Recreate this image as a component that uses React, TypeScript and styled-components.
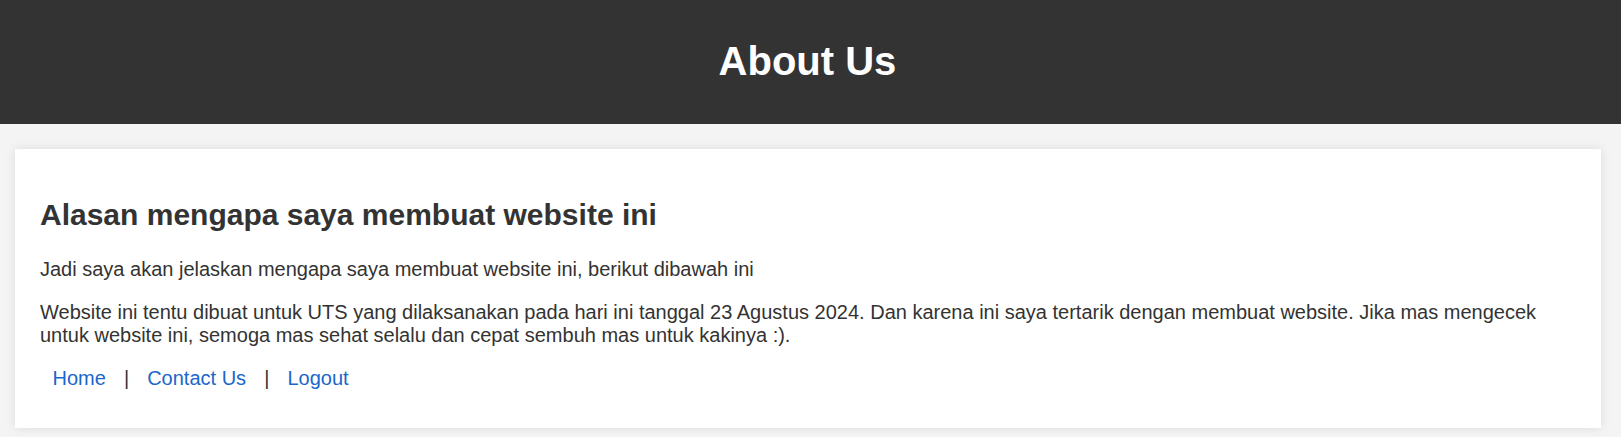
import React from "react";
import styled, { createGlobalStyle } from "styled-components";

const GlobalStyle = createGlobalStyle`
  html, body {
    margin: 0;
    padding: 0;
    background: #f4f4f4;
    font-family: "Liberation Sans", Arial, sans-serif;
    color: #333333;
  }
`;

const Header = styled.header`
  background: #333333;
  color: #ffffff;
  text-align: center;
  padding: 38px 6px 40px 0;
`;

const Title = styled.h1`
  margin: 0;
  font-size: 40px;
  line-height: 46px;
  font-weight: 700;
`;

const Main = styled.main`
  padding: 25px 20px 10px 15px;
`;

const Card = styled.section`
  background: #ffffff;
  padding: 24px 25px 25px;
  box-shadow: 0 0 10px rgba(0, 0, 0, 0.1);
`;

const Heading = styled.h2`
  margin: 25px 0;
  font-size: 30px;
  line-height: 34.5px;
  font-weight: 700;
  color: #333333;
`;

const Paragraph = styled.p`
  margin: 20px 0;
  font-size: 20px;
  line-height: 23px;
`;

const Nav = styled.nav`
  margin: 20px 0 13px;
  font-size: 20px;
  line-height: 23px;
  color: #333333;
`;

const NavLink = styled.a`
  color: #1a66cc;
  text-decoration: none;
  margin: 0 12.5px;
`;

const links = ["Home", "Contact Us", "Logout"];

export default function App() {
  return (
    <>
      <GlobalStyle />
      <Header>
        <Title>About Us</Title>
      </Header>
      <Main>
        <Card>
          <Heading>Alasan mengapa saya membuat website ini</Heading>
          <Paragraph>
            Jadi saya akan jelaskan mengapa saya membuat website ini, berikut dibawah ini
          </Paragraph>
          <Paragraph>
            Website ini tentu dibuat untuk UTS yang dilaksanakan pada hari ini tanggal 23
            Agustus 2024. Dan karena ini saya tertarik dengan membuat website. Jika mas
            mengecek untuk website ini, semoga mas sehat selalu dan cepat sembuh mas untuk
            kakinya :).
          </Paragraph>
          <Nav>
            {links.map((l, i) => (
              <React.Fragment key={l}>
                {i > 0 && " | "}
                <NavLink href="#">{l}</NavLink>
              </React.Fragment>
            ))}
          </Nav>
        </Card>
      </Main>
    </>
  );
}
